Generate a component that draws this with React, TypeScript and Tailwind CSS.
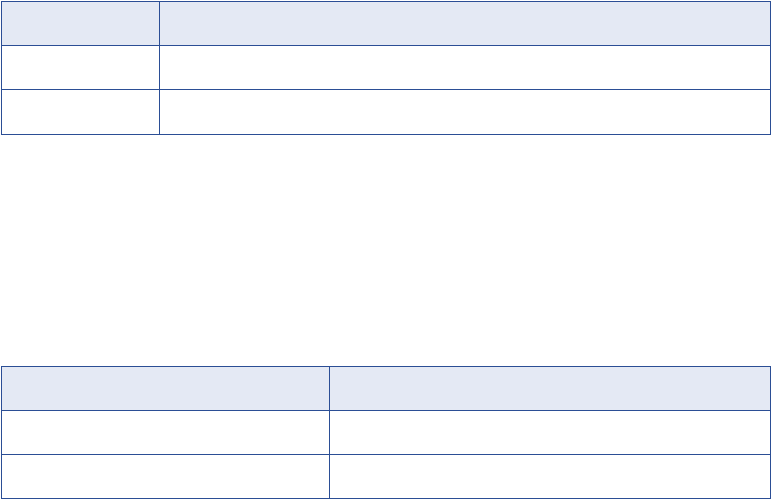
import React from "react";

const B = "border-[#2b4e95]";

function Table({ firstCol, mt, lastH }: { firstCol: string; mt: string; lastH: string }) {
  const rows = [
    { bg: "bg-[#e4e9f4]", last: false },
    { bg: "bg-white", last: false },
    { bg: "bg-white", last: true },
  ];
  return (
    <div className={`ml-[1px] ${mt} w-[770px] border ${B} flex flex-col`}>
      {rows.map((r, i) => (
        <div
          key={i}
          className={`flex ${r.bg} ${r.last ? lastH : `h-[44px] border-b ${B}`}`}
        >
          <div className={`${firstCol} h-full border-r ${B}`} />
          <div className="flex-1 h-full" />
        </div>
      ))}
    </div>
  );
}

export default function App() {
  return (
    <div className="w-[771px] h-[499px] bg-white overflow-hidden" style={{ fontFamily: "'Liberation Sans', Arial, sans-serif" }}>
      <Table firstCol="w-[158px]" mt="mt-[1px]" lastH="h-[44px]" />
      <Table firstCol="w-[328px]" mt="mt-[231px]" lastH="h-[43px]" />
    </div>
  );
}
